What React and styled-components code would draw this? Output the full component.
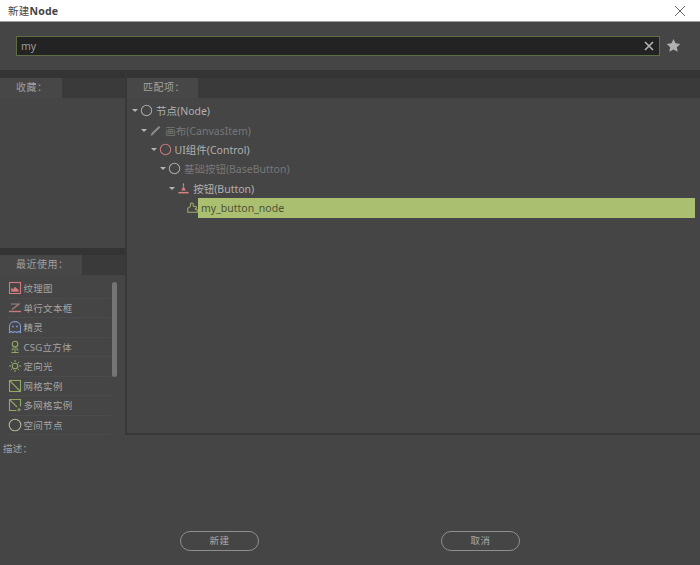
import React from "react";
import styled, { createGlobalStyle } from "styled-components";

const GlobalStyle = createGlobalStyle`
  html, body {
    margin: 0;
    padding: 0;
    background: #454545;
  }
  body {
    font-family: "Noto Sans", "Noto Sans CJK SC", sans-serif;
    font-size: 10px;
    color: #b9b9b9;
  }
`;

const treeItems = [
  { label: "节点(Node)", level: 0, icon: "circle", dim: false },
  { label: "画布(CanvasItem)", level: 1, icon: "brush", dim: true },
  { label: "UI组件(Control)", level: 2, icon: "redCircle", dim: false },
  { label: "基础按钮(BaseButton)", level: 3, icon: "circle", dim: true },
  { label: "按钮(Button)", level: 4, icon: "button", dim: false },
];

const recentItems = [
  { label: "纹理图", icon: "texture" },
  { label: "单行文本框", icon: "lineEdit" },
  { label: "精灵", icon: "sprite" },
  { label: "CSG立方体", icon: "csg" },
  { label: "定向光", icon: "light" },
  { label: "网格实例", icon: "mesh" },
  { label: "多网格实例", icon: "multiMesh" },
  { label: "空间节点", icon: "spatial" },
];

function NodeIcon({ name, size = 14 }) {
  const common = {
    width: size,
    height: size,
    viewBox: "0 0 14 14",
    fill: "none",
    strokeWidth: 1.1,
  };
  switch (name) {
    case "circle":
      return (
        <svg {...common} stroke="#a8a8a8">
          <circle cx="7" cy="7" r="5.6" />
        </svg>
      );
    case "redCircle":
      return (
        <svg {...common} stroke="#c97a7a">
          <circle cx="7" cy="7" r="5.6" />
        </svg>
      );
    case "brush":
      return (
        <svg {...common} stroke="#8f8f8f">
          <path d="M4 10 L11.5 3" strokeWidth="2" />
          <path d="M2 12.5 L5 11 L3.4 9.2 Z" fill="#8f8f8f" strokeWidth="0.5" />
        </svg>
      );
    case "button":
      return (
        <svg {...common} stroke="#d98080">
          <path d="M7 1.5 V5" strokeWidth="1.3" />
          <path d="M7 5 L4.8 9 H9.2 Z" fill="#d98080" strokeWidth="0.4" />
          <path d="M1.5 11.5 H12.5" strokeWidth="1.6" />
        </svg>
      );
    case "script":
      return (
        <svg {...common} stroke="#9bb068">
          <path d="M1 13 V8 L4.5 5.5 V2.8 C4.5 0.6 8 0.6 8 2.8 V5.5 H10 C13 5.5 13 8.8 10 8.8 L13 10 V13 Z" strokeWidth="1.3" />
        </svg>
      );
    case "texture":
      return (
        <svg {...common} stroke="#d07c7c">
          <rect x="1.5" y="1.5" width="11" height="11" />
          <path d="M3.5 10.5 V7 L5.5 8.5 L7 6 L10.5 9 V10.5 Z" fill="#d07c7c" strokeWidth="0.4" />
        </svg>
      );
    case "lineEdit":
      return (
        <svg {...common} stroke="#c97a7a">
          <path d="M3 3 H11 L4 8.5" strokeWidth="1.2" stroke="#a88080" />
          <path d="M1 10.5 H13" strokeWidth="1.4" />
        </svg>
      );
    case "sprite":
      return (
        <svg {...common} stroke="#8299cf">
          <path d="M1.5 12.5 V6.5 C1.5 0 12.5 0 12.5 6.5 V12.5 L10.5 11.5 L9 12.5 L7 11.5 L5 12.5 L3.5 11.5 Z" />
          <circle cx="5" cy="6.5" r="0.9" fill="#8299cf" strokeWidth="0" />
          <circle cx="9" cy="6.5" r="0.9" fill="#8299cf" strokeWidth="0" />
        </svg>
      );
    case "csg":
      return (
        <svg {...common} stroke="#92a863">
          <circle cx="7" cy="4" r="2.8" />
          <path d="M5 7.5 V10 M9 7.5 V10 M7 7 V12.5 M3.5 12.5 H10.5 M3.5 10 H5 M9 10 H10.5" strokeWidth="1" />
        </svg>
      );
    case "light":
      return (
        <svg {...common} stroke="#92a863">
          <circle cx="7" cy="7" r="2.8" />
          <path d="M7 1 V3 M7 11 V13 M1 7 H3 M11 7 H13 M2.8 2.8 L4.2 4.2 M9.8 9.8 L11.2 11.2 M2.8 11.2 L4.2 9.8 M9.8 4.2 L11.2 2.8" strokeWidth="1" />
        </svg>
      );
    case "mesh":
      return (
        <svg {...common} stroke="#92a863">
          <rect x="1.5" y="1.5" width="11" height="11" />
          <path d="M1.5 1.5 L12.5 12.5" />
        </svg>
      );
    case "multiMesh":
      return (
        <svg {...common} stroke="#92a863">
          <path d="M8.5 12.5 H1.5 V1.5 H12.5 V8.5 M1.5 1.5 L9 9" />
          <path d="M11 10 V13.5 M9.3 11.8 H12.8" strokeWidth="1" />
        </svg>
      );
    case "spatial":
      return (
        <svg {...common} stroke="#b0b596">
          <circle cx="7" cy="7" r="5.8" />
        </svg>
      );
    default:
      return null;
  }
}

export default function App() {
  return (
    <>
      <GlobalStyle />
      <Window>
        <TitleBar>
          <TitleText>
            新建<b>Node</b>
          </TitleText>
          <CloseIcon viewBox="0 0 12 12">
            <path d="M1 1 L11 11 M11 1 L1 11" />
          </CloseIcon>
        </TitleBar>

        <SearchBand>
          <SearchBox>
            <SearchValue>my</SearchValue>
            <ClearIcon viewBox="0 0 10 10">
              <path d="M1 1 L9 9 M9 1 L1 9" />
            </ClearIcon>
          </SearchBox>
          <StarIcon viewBox="0 0 24 24">
            <path d="M12 1.5 L15.3 8.4 L22.8 9.4 L17.3 14.6 L18.7 22.1 L12 18.4 L5.3 22.1 L6.7 14.6 L1.2 9.4 L8.7 8.4 Z" />
          </StarIcon>
        </SearchBand>

        <Main>
          <LeftColumn>
            <TabStrip>
              <Tab $width={62}>收藏：</Tab>
            </TabStrip>
            <FavoritesPanel />
            <TabStrip $short>
              <Tab $width={82}>最近使用：</Tab>
            </TabStrip>
            <RecentPanel>
              {recentItems.map((item) => (
                <RecentRow key={item.label}>
                  <NodeIcon name={item.icon} />
                  <RecentLabel>{item.label}</RecentLabel>
                </RecentRow>
              ))}
              <Scrollbar />
            </RecentPanel>
          </LeftColumn>

          <RightColumn>
            <TabStrip>
              <Tab $width={71}>匹配项：</Tab>
            </TabStrip>
            <TreePanel>
              {treeItems.map((item) => (
                <TreeRow key={item.label} $level={item.level}>
                  <Arrow />
                  <NodeIcon name={item.icon} size={13} />
                  <TreeLabel $dim={item.dim}>{item.label}</TreeLabel>
                </TreeRow>
              ))}
              <SelectedRow>
                <NodeIcon name="script" size={11} />
                <SelectedLabel>my_button_node</SelectedLabel>
              </SelectedRow>
            </TreePanel>
          </RightColumn>
        </Main>

        <Description>
          <DescriptionLabel>描述：</DescriptionLabel>
          <Buttons>
            <PillButton>新建</PillButton>
            <PillButton>取消</PillButton>
          </Buttons>
        </Description>
      </Window>
    </>
  );
}

const Window = styled.div`
  width: 700px;
  height: 565px;
  display: flex;
  flex-direction: column;
  overflow: hidden;
  background: #454545;
`;

const TitleBar = styled.div`
  height: 21px;
  flex: none;
  display: flex;
  align-items: center;
  justify-content: space-between;
  padding: 0 14px 0 8px;
  background: #ffffff;
  border-bottom: 1px solid #9c9c9c;
`;

const TitleText = styled.div`
  color: #444444;
  font-size: 10.5px;
  letter-spacing: 0.2px;

  b {
    font-weight: 700;
  }
`;

const CloseIcon = styled.svg`
  width: 12px;
  height: 12px;
  fill: none;
  stroke: #666666;
  stroke-width: 1;
`;

const SearchBand = styled.div`
  height: 48px;
  flex: none;
  box-sizing: border-box;
  padding: 14px 19px 0 16px;
  display: flex;
  align-items: flex-start;
  justify-content: space-between;
  background: #454545;
`;

const SearchBox = styled.div`
  width: 644px;
  height: 20px;
  box-sizing: border-box;
  display: flex;
  align-items: center;
  justify-content: space-between;
  padding: 0 5px 0 4px;
  background: #232323;
  border: 1px solid #5f6d45;
`;

const SearchValue = styled.span`
  color: #9c9c9c;
  font-size: 10.5px;
`;

const ClearIcon = styled.svg`
  width: 10px;
  height: 10px;
  fill: none;
  stroke: #b4b4b4;
  stroke-width: 1.6;
`;

const StarIcon = styled.svg`
  width: 15px;
  height: 15px;
  margin-top: 2px;
  fill: #b0b0b0;
`;

const Main = styled.div`
  flex: 1;
  min-height: 0;
  display: flex;
  gap: 2px;
  background: #383838;
`;

const LeftColumn = styled.div`
  width: 125px;
  display: flex;
  flex-direction: column;
`;

const RightColumn = styled.div`
  flex: 1;
  display: flex;
  flex-direction: column;
`;

const TabStrip = styled.div`
  height: ${(p) => (p.$short ? 27 : 28)}px;
  flex: none;
  box-sizing: border-box;
  display: flex;
  align-items: flex-end;
  background: #3a3a3a;
  border-top: ${(p) => (p.$short ? 7 : 8)}px solid #343434;
`;

const Tab = styled.div`
  width: ${(p) => p.$width}px;
  height: 20px;
  box-sizing: border-box;
  padding-left: 16px;
  line-height: 19px;
  font-size: 10px;
  letter-spacing: 0.5px;
  color: #a0a0a0;
  background: #474747;
`;

const FavoritesPanel = styled.div`
  height: 150px;
  flex: none;
  background: #454545;
`;

const RecentPanel = styled.div`
  position: relative;
  flex: 1;
  box-sizing: border-box;
  padding: 4px 0 0 8px;
  background: #454545;
`;

const RecentRow = styled.div`
  width: 102px;
  height: 19.5px;
  box-sizing: border-box;
  display: flex;
  align-items: center;
  gap: 1.5px;
  border-bottom: 1px solid #4b4b4b;

  &:last-of-type {
    border-bottom: 0;
  }
`;

const RecentLabel = styled.span`
  color: #a4a4a4;
  font-size: 9.5px;
  letter-spacing: 0.3px;
`;

const Scrollbar = styled.div`
  position: absolute;
  top: 7px;
  right: 8px;
  width: 5px;
  height: 95px;
  border-radius: 3px;
  background: #757575;
`;

const TreePanel = styled.div`
  flex: 1;
  box-sizing: border-box;
  padding-top: 3px;
  background: #454545;
`;

const TreeRow = styled.div`
  height: 19.4px;
  display: flex;
  align-items: center;
  padding-left: ${(p) => 5 + p.$level * 9.3}px;
`;

const Arrow = styled.span`
  width: 0;
  height: 0;
  margin-right: 2px;
  border-left: 3px solid transparent;
  border-right: 3px solid transparent;
  border-top: 3px solid #b4b4b4;
`;

const TreeLabel = styled.span`
  margin-left: 3px;
  font-size: 10.5px;
  color: ${(p) => (p.$dim ? "#777777" : "#b0b0b0")};
`;

const SelectedRow = styled.div`
  height: 20px;
  display: flex;
  align-items: center;
  padding-left: 60px;
`;

const SelectedLabel = styled.span`
  flex: 1;
  height: 20px;
  margin-right: 5px;
  padding-left: 3px;
  line-height: 20px;
  font-size: 10.5px;
  color: #4d5238;
  background: #aac070;
`;

const Description = styled.div`
  height: 132px;
  flex: none;
  box-sizing: border-box;
  padding: 6px 3px 0;
  display: flex;
  flex-direction: column;
  background: #454545;
  border-top: 2px solid #383838;
`;

const DescriptionLabel = styled.div`
  font-size: 9.5px;
  letter-spacing: 0.3px;
  color: #a0a0a0;
`;

const Buttons = styled.div`
  margin-top: 76px;
  display: flex;
  padding-left: 177px;
  gap: 182px;
`;

const PillButton = styled.div`
  width: 79px;
  height: 20px;
  box-sizing: border-box;
  text-align: center;
  line-height: 18px;
  font-size: 9.5px;
  letter-spacing: 0.5px;
  color: #a8a8a8;
  border: 1px solid #8f8f8f;
  border-radius: 10px;
`;
